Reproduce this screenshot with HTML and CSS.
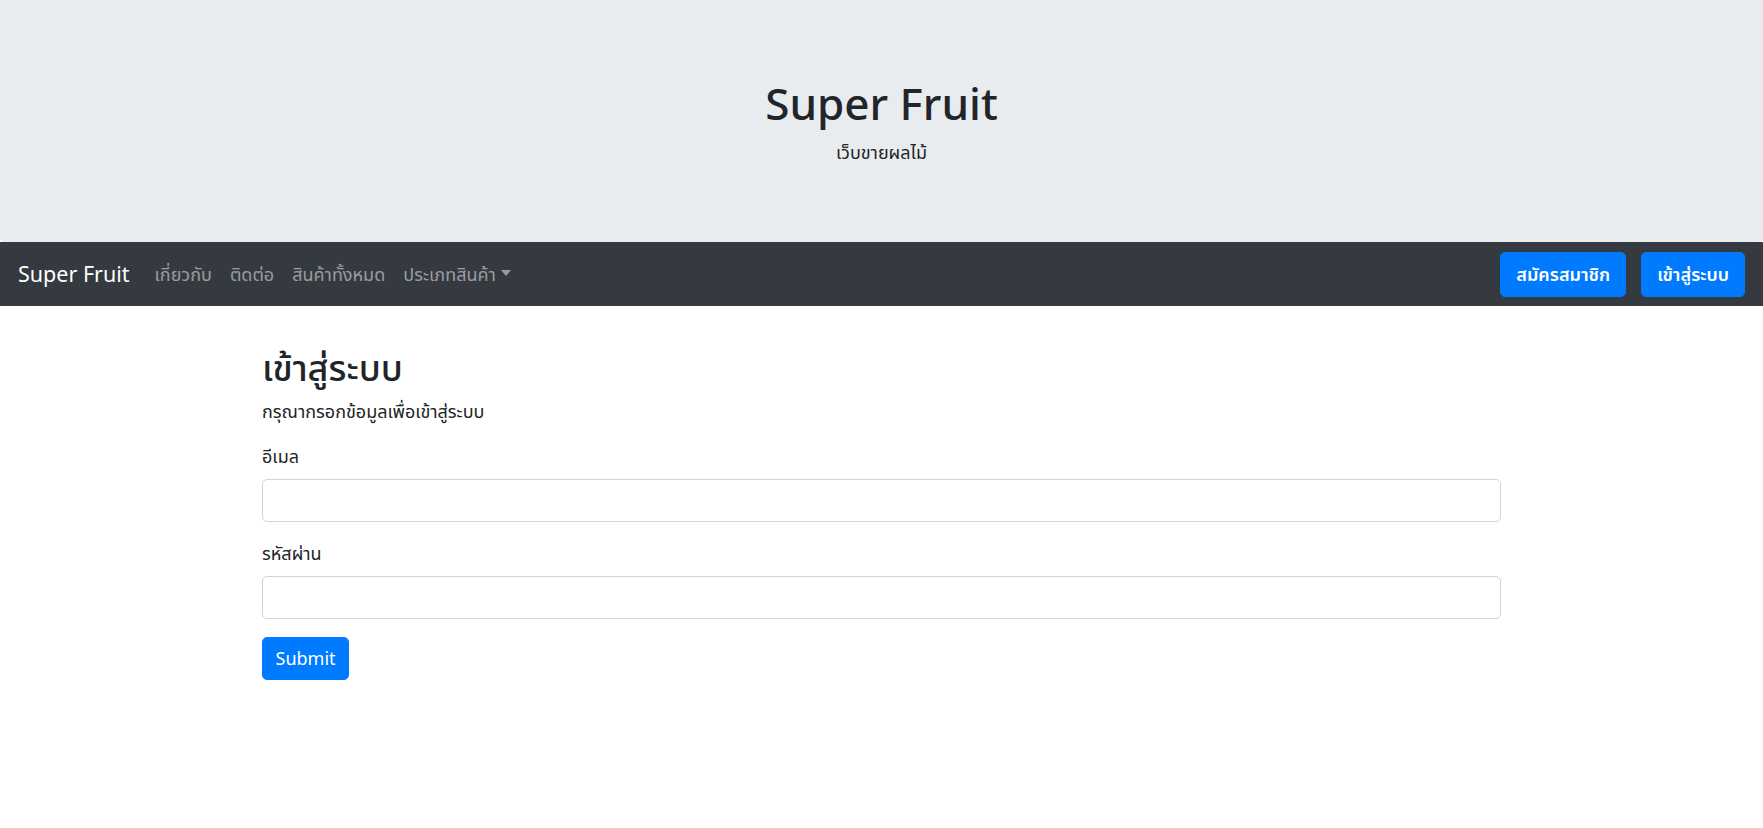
FILE: index.html
```html
<!DOCTYPE html>
<html lang="th">
<head>
<meta charset="utf-8">
<title>Super Fruit</title>
<link rel="stylesheet" href="styles.css">
</head>
<body>
<header class="jumbotron">
  <h1 class="jumbo-title">Super Fruit</h1>
  <p class="jumbo-sub">เว็บขายผลไม้</p>
</header>
<nav class="navbar">
  <a class="brand" href="#">Super Fruit</a>
  <ul class="nav-links">
    <li><a class="nav-link" href="#">เกี่ยวกับ</a></li>
    <li><a class="nav-link" href="#">ติดต่อ</a></li>
    <li><a class="nav-link" href="#">สินค้าทั้งหมด</a></li>
    <li><a class="nav-link dropdown" href="#">ประเภทสินค้า<span class="caret"></span></a></li>
  </ul>
  <div class="nav-actions">
    <a class="btn btn-primary" href="#">สมัครสมาชิก</a>
    <a class="btn btn-primary" href="#">เข้าสู่ระบบ</a>
  </div>
</nav>
<main class="container">
  <h2 class="page-title">เข้าสู่ระบบ</h2>
  <p class="page-sub">กรุณากรอกข้อมูลเพื่อเข้าสู่ระบบ</p>
  <form class="login-form">
    <div class="form-group">
      <label class="form-label" for="email">อีเมล</label>
      <input class="form-control" type="email" id="email">
    </div>
    <div class="form-group">
      <label class="form-label" for="password">รหัสผ่าน</label>
      <input class="form-control" type="password" id="password">
    </div>
    <button class="btn btn-primary btn-submit" type="submit">Submit</button>
  </form>
</main>
</body>
</html>
```
FILE: styles.css
```css
* { box-sizing: border-box; }
html, body { margin: 0; padding: 0; }
body {
  font-family: "Segoe UI", "Noto Sans", "Leelawadee UI", "Noto Sans Thai", sans-serif;
  font-size: 18px;
  line-height: 1.5;
  color: #212529;
  background: #fff;
}
.jumbotron {
  background: #e9ecef;
  border-radius: 0 0 5px 5px;
  padding: 76px 36px 76px;
  text-align: center;
  display: flex;
  flex-direction: column;
  align-items: center;
}
.jumbo-title {
  margin: 0 0 9px;
  font-size: 44px;
  font-weight: 500;
  line-height: 54px;
}
.jumbo-sub {
  margin: 0;
  font-size: 18px;
  line-height: 27px;
}
.navbar {
  background: #343a40;
  height: 64px;
  padding: 0 18px;
  display: flex;
  align-items: center;
}
.brand {
  color: #fff;
  text-decoration: none;
  font-size: 21.5px;
  line-height: 1.5;
  margin-right: 16px;
}
.nav-links {
  list-style: none;
  margin: 0;
  padding: 0;
  display: flex;
  align-items: center;
}
.nav-link {
  display: flex;
  align-items: center;
  padding: 9px;
  color: rgba(255, 255, 255, 0.5);
  text-decoration: none;
}
.caret {
  display: inline-block;
  margin-left: 5px;
  width: 0;
  height: 0;
  border-top: 6px solid rgba(255, 255, 255, 0.5);
  border-left: 5px solid transparent;
  border-right: 5px solid transparent;
  transform: translateY(-1px);
}
.nav-actions {
  margin-left: auto;
  display: flex;
  gap: 15px;
}
.btn {
  display: inline-block;
  font-family: inherit;
  font-size: 18px;
  line-height: 27px;
  padding: 8px 15px;
  border-radius: 5px;
  border: 1px solid transparent;
  text-decoration: none;
  cursor: pointer;
}
.btn-primary {
  background: #007bff;
  border-color: #007bff;
  color: #fff;
}
.nav-actions .btn { font-weight: 600; }
.container {
  width: 1239px;
  margin: 40px auto 0;
}
.page-title {
  margin: 0 0 9px;
  font-size: 36px;
  font-weight: 500;
  line-height: 43px;
}
.page-sub {
  margin: 0 0 18px;
}
.form-group {
  margin-bottom: 18px;
}
.form-label {
  display: block;
  margin-bottom: 9px;
}
.form-control {
  display: block;
  width: 100%;
  height: 43px;
  padding: 6.75px 13.5px;
  font-size: 18px;
  font-family: inherit;
  color: #495057;
  background: #fff;
  border: 1px solid #ced4da;
  border-radius: 5px;
}
.btn-submit {
  padding: 6.75px 12.5px;
  font-weight: 400;
}
```
